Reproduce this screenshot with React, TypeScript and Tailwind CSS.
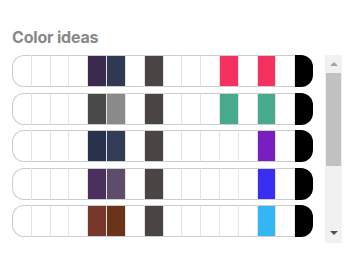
import React from "react";

// index -> colour for each palette row (16 cells, last one always black)
const palettes: Record<number, string>[] = [
  { 4: "#3a2b4e", 5: "#2f3a52", 7: "#4a4544", 11: "#f5325f", 13: "#f5325f" },
  { 4: "#494949", 5: "#8a8a8a", 7: "#4a4544", 11: "#48aa8c", 13: "#48aa8c" },
  { 4: "#28324c", 5: "#333c56", 7: "#4a4544", 13: "#7a1fbf" },
  { 4: "#4b305f", 5: "#5e4c6b", 7: "#4a4544", 13: "#3a2ef2" },
  { 4: "#78372a", 5: "#6b3418", 7: "#4a4544", 13: "#34b6f5" },
  { 4: "#2d4a3e", 5: "#3c5c4e", 7: "#4a4544", 13: "#f2a53a" },
  { 4: "#5a2d2d", 5: "#7a3b3b", 7: "#4a4544", 13: "#e8e23a" },
];

function PaletteRow({ colors }: { colors: Record<number, string> }) {
  const cells = Array.from({ length: 15 }, (_, i) => i);
  return (
    <div className="flex h-[32px] w-[301px] shrink-0">
      {cells.map((i) => (
        <div
          key={i}
          className={
            "flex-1 border-y border-r border-y-[#cccccc] border-r-[#e4e4e4] " +
            (i === 0 ? "border-l border-l-[#cccccc] rounded-l-[12px]" : "")
          }
          style={colors[i] ? { backgroundColor: colors[i] } : undefined}
        />
      ))}
      <div className="flex-1 bg-black rounded-r-[12px]" />
    </div>
  );
}

function Scrollbar() {
  return (
    <div className="flex h-[188px] w-[17px] flex-col bg-[#f1f1f1]">
      <div className="flex h-[17px] items-center justify-center pt-px">
        <svg width="8" height="4" viewBox="0 0 8 4">
          <path d="M0 4 L4 0 L8 4 Z" fill="#a3a3a3" />
        </svg>
      </div>
      <div className="mx-px mt-px h-[93px] bg-[#c1c1c1]" />
      <div className="flex-1" />
      <div className="flex h-[17px] items-center justify-center pb-[3px]">
        <svg width="8" height="4" viewBox="0 0 8 4">
          <path d="M0 0 L8 0 L4 4 Z" fill="#505050" />
        </svg>
      </div>
    </div>
  );
}

export default function App() {
  return (
    <div
      className="w-[356px] h-[262px] bg-white pl-3 pt-[27px]"
      style={{ fontFamily: "Inter, 'Liberation Sans', sans-serif" }}
    >
      <h2 className="text-[16px] leading-[20px] font-bold tracking-[-0.2px] text-[#888888]">
        Color ideas
      </h2>
      <div className="mt-[8px] flex gap-[12px]">
        <div className="h-[188px] w-[301px] overflow-hidden">
          <div className="flex flex-col gap-[5.5px]">
            {palettes.map((p, idx) => (
              <PaletteRow key={idx} colors={p} />
            ))}
          </div>
        </div>
        <Scrollbar />
      </div>
    </div>
  );
}
